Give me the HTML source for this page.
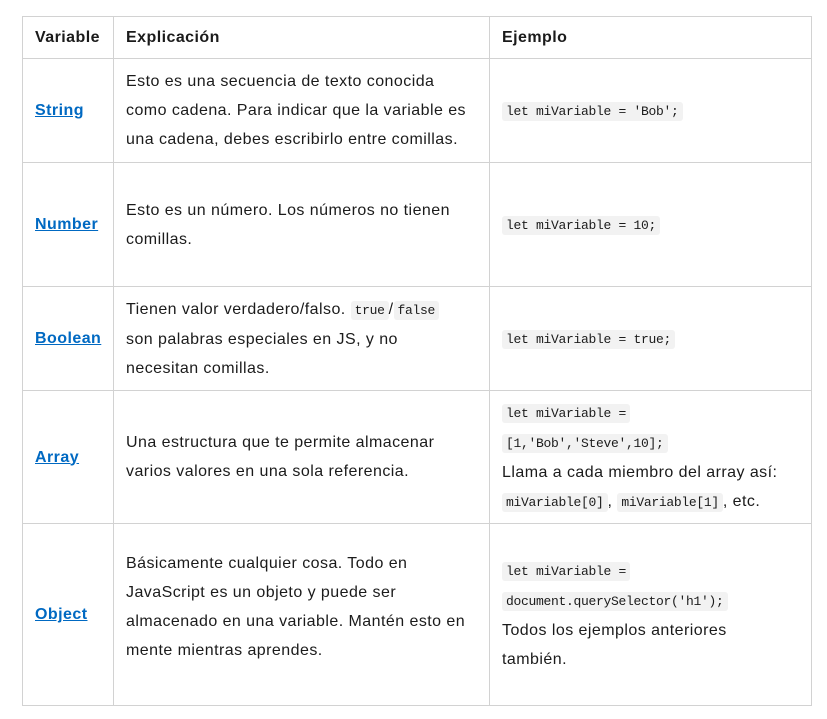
<!DOCTYPE html>
<html><head><meta charset="utf-8"><style>
body{margin:0;background:#fff;font-family:"Liberation Sans",sans-serif;color:#1b1b1b;}
table{position:absolute;left:22px;top:16px;border-collapse:collapse;width:789px;table-layout:fixed;}
td,th{border:1px solid #d2d2d2;padding:0 12px;font-size:16px;line-height:29px;vertical-align:middle;text-align:left;white-space:nowrap;letter-spacing:0.45px;}
th{font-weight:bold;height:41px;}
a{color:#0069c2;font-weight:bold;text-decoration:underline;}
code{font-family:"Liberation Mono",monospace;font-size:13px;background:#f2f2f2;border-radius:3px;padding:2px 4px;letter-spacing:-0.3px;}
</style></head><body>
<table>
<colgroup><col style="width:91px"><col style="width:376px"><col style="width:322px"></colgroup>
<tr><th>Variable</th><th>Explicación</th><th>Ejemplo</th></tr>
<tr style="height:104px"><td><a>String</a></td><td>Esto es una secuencia de texto conocida<br>como cadena. Para indicar que la variable es<br>una cadena, debes escribirlo entre comillas.</td><td><code>let miVariable = 'Bob';</code></td></tr>
<tr style="height:124px"><td><a>Number</a></td><td>Esto es un número. Los números no tienen<br>comillas.</td><td><code>let miVariable = 10;</code></td></tr>
<tr style="height:104px"><td><a>Boolean</a></td><td>Tienen valor verdadero/falso. <code>true</code>/<code>false</code><br>son palabras especiales en JS, y no<br>necesitan comillas.</td><td><code>let miVariable = true;</code></td></tr>
<tr style="height:133px"><td><a>Array</a></td><td>Una estructura que te permite almacenar<br>varios valores en una sola referencia.</td><td><code>let miVariable =</code><br><code>[1,'Bob','Steve',10];</code><br>Llama a cada miembro del array así:<br><code>miVariable[0]</code>, <code>miVariable[1]</code>, etc.</td></tr>
<tr style="height:182px"><td><a>Object</a></td><td style="padding-bottom:16px">Básicamente cualquier cosa. Todo en<br>JavaScript es un objeto y puede ser<br>almacenado en una variable. Mantén esto en<br>mente mientras aprendes.</td><td><code>let miVariable =</code><br><code>document.querySelector('h1');</code><br>Todos los ejemplos anteriores<br>también.</td></tr>
</table>
</body></html>
